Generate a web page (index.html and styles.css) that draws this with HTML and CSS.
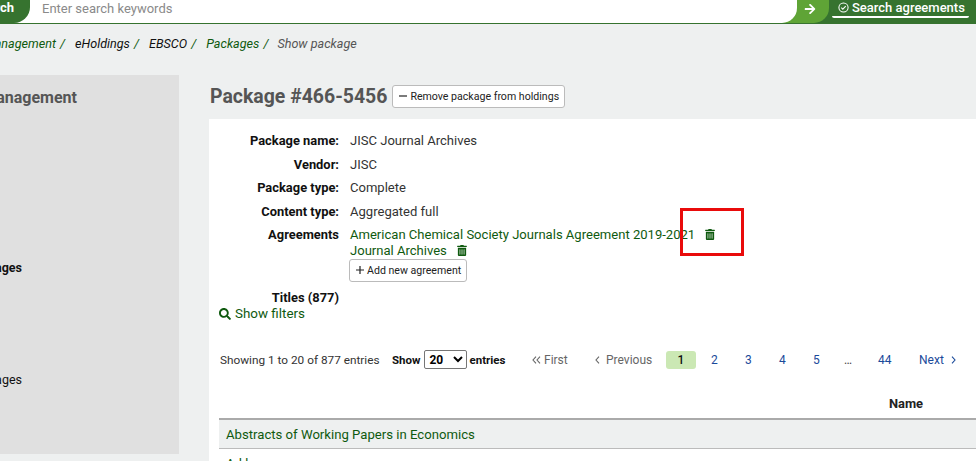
FILE: index.html
```html
<!DOCTYPE html>
<html lang="en">
<head>
<meta charset="utf-8">
<title>Show package</title>
<link rel="stylesheet" href="styles.css">
</head>
<body>
<header class="topbar">
  <div class="search-label"><span>Search</span></div>
  <div class="search-input">Enter search keywords</div>
  <div class="search-go">
    <svg class="go-icon" viewBox="0 0 448 512"><path d="M190.500 66.900l22.200-22.200c9.400-9.400 24.600-9.400 33.900 0L441 239c9.400 9.400 9.400 24.600 0 33.900L246.600 467.300c-9.400 9.400-24.600 9.400-33.900 0l-22.200-22.200c-9.500-9.500-9.300-25 .4-34.300L311.400 296H24c-13.300 0-24-10.700-24-24v-32c0-13.300 10.700-24 24-24h287.400L190.900 101.200c-9.800-9.300-10-24.800-.4-34.300z"/></svg>
  </div>
  <div class="search-tab">
    <svg class="tab-icon" viewBox="0 0 16 16"><circle cx="8" cy="8" r="6.700"/><path d="M4.800 8.200l2.200 2.200 4.200-4.400"/></svg>
    <span>Search agreements</span>
  </div>
</header>

<nav class="breadcrumbs">
  <a class="crumb-link">Management</a><span class="sep">/</span>
  <span class="crumb-plain">eHoldings</span><span class="sep">/</span>
  <span class="crumb-plain">EBSCO</span><span class="sep">/</span>
  <a class="crumb-link">Packages</a><span class="sep">/</span>
  <span class="crumb-current">Show package</span>
</nav>

<div class="layout">
  <aside class="sidebar">
    <h2 class="side-title"><span>Management</span></h2>
    <p class="side-item side-bold"><span>Packages</span></p>
    <p class="side-item side-normal"><span>Packages</span></p>
  </aside>
  <main class="main">
    <div class="title-row">
      <h1 class="page-title">Package #466-5456</h1>
      <button class="btn">
        <svg class="btn-icon" viewBox="0 0 10 10"><path d="M0 5h10"/></svg>Remove package from holdings
      </button>
    </div>
    <section class="panel">
      <dl class="details">
        <div class="row"><dt>Package name:</dt><dd>JISC Journal Archives</dd></div>
        <div class="row"><dt>Vendor:</dt><dd>JISC</dd></div>
        <div class="row"><dt>Package type:</dt><dd>Complete</dd></div>
        <div class="row"><dt>Content type:</dt><dd>Aggregated full</dd></div>
        <div class="row row-agreements"><dt>Agreements</dt>
          <dd>
            <div class="agreement"><a>American Chemical Society Journals Agreement 2019-2021</a>
              <svg class="trash" viewBox="0 0 448 512"><path d="M32 464a48 48 0 0 0 48 48h288a48 48 0 0 0 48-48V128H32zm272-256a16 16 0 0 1 32 0v224a16 16 0 0 1-32 0zm-96 0a16 16 0 0 1 32 0v224a16 16 0 0 1-32 0zm-96 0a16 16 0 0 1 32 0v224a16 16 0 0 1-32 0zM432 32H312l-9.400-18.700A24 24 0 0 0 281.100 0H166.800a23.700 23.700 0 0 0-21.400 13.300L136 32H16A16 16 0 0 0 0 48v32a16 16 0 0 0 16 16h416a16 16 0 0 0 16-16V48a16 16 0 0 0-16-16z"/></svg>
            </div>
            <div class="agreement"><a>Journal Archives</a>
              <svg class="trash" viewBox="0 0 448 512"><path d="M32 464a48 48 0 0 0 48 48h288a48 48 0 0 0 48-48V128H32zm272-256a16 16 0 0 1 32 0v224a16 16 0 0 1-32 0zm-96 0a16 16 0 0 1 32 0v224a16 16 0 0 1-32 0zm-96 0a16 16 0 0 1 32 0v224a16 16 0 0 1-32 0zM432 32H312l-9.400-18.700A24 24 0 0 0 281.100 0H166.800a23.700 23.700 0 0 0-21.400 13.300L136 32H16A16 16 0 0 0 0 48v32a16 16 0 0 0 16 16h416a16 16 0 0 0 16-16V48a16 16 0 0 0-16-16z"/></svg>
            </div>
            <button class="btn btn-add">
              <svg class="btn-icon" viewBox="0 0 10 10"><path d="M0 5h10M5 0v10"/></svg>Add new agreement
            </button>
          </dd>
        </div>
        <div class="row row-titles"><dt>Titles (877)</dt></div>
      </dl>
      <a class="filters">
        <svg class="search-icon" viewBox="0 0 512 512"><path d="M505 442.700L405.300 343c-4.500-4.500-10.600-7-17-7H372c27.600-35.300 44-79.700 44-128C416 93.100 322.900 0 208 0S0 93.100 0 208s93.100 208 208 208c48.300 0 92.700-16.400 128-44v16.300c0 6.400 2.500 12.500 7 17l99.700 99.700c9.400 9.400 24.600 9.400 33.900 0l28.300-28.300c9.400-9.400 9.400-24.600.1-34zM208 336c-70.700 0-128-57.200-128-128 0-70.700 57.200-128 128-128 70.700 0 128 57.200 128 128 0 70.700-57.200 128-128 128z"/></svg>Show filters
      </a>
      <div class="table-controls">
        <span class="info">Showing 1 to 20 of 877 entries</span>
        <label class="length">Show
          <select class="length-select"><option>20</option></select>
          entries</label>
        <div class="pager">
          <span class="page page-off page-first"><svg class="chev chev-double" viewBox="0 0 9 8"><path d="M4 .7L1 4l3 3.300M8 .7L5 4l3 3.300"/></svg>First</span>
          <span class="page page-off page-prev"><svg class="chev" viewBox="0 0 5 8"><path d="M4 .7L1 4l3 3.300"/></svg>Previous</span>
          <span class="page page-current">1</span>
          <span class="page">2</span>
          <span class="page">3</span>
          <span class="page">4</span>
          <span class="page page-five">5</span>
          <span class="page page-ellipsis">…</span>
          <span class="page page-last">44</span>
          <span class="page page-next">Next<svg class="chev" viewBox="0 0 5 8"><path d="M1 .7L4 4 1 7.300"/></svg></span>
        </div>
      </div>
      <table class="results">
        <thead><tr><th>Name</th></tr></thead>
        <tbody>
          <tr class="odd"><td><a>Abstracts of Working Papers in Economics</a></td></tr>
          <tr><td><a>Ad hoc</a></td></tr>
        </tbody>
      </table>
    </section>
  </main>
</div>
<div class="highlight"></div>
</body>
</html>
```
FILE: styles.css
```css
* { box-sizing: border-box; }
html, body { margin: 0; padding: 0; height: 461px; overflow: hidden; }
body {
  background: #eef0f0;
  font-family: Roboto, "Liberation Sans", sans-serif;
  font-size: 13.050px;
  color: #333;
  position: relative;
}
a { color: #0f5a0f; text-decoration: none; }

.topbar {
  display: flex;
  height: 24px;
  background: #36732f;
  border-bottom: 1px solid #36732f;
}
.search-label {
  width: 30px;
  height: 23px;
  flex: none;
  display: flex;
  justify-content: flex-end;
  padding-right: 16px;
  background: #36732f;
  color: #fff;
  font-weight: 700;
  font-size: 13px;
  line-height: 16px;
  border-bottom-right-radius: 16px;
  white-space: nowrap;
  position: relative;
  z-index: 2;
}
.search-input {
  width: 787px;
  flex: none;
  margin-left: -20px;
  height: 23px;
  background: #fff;
  color: #8a8a8a;
  font-size: 13px;
  line-height: 17px;
  padding-left: 32px;
  border-bottom-right-radius: 15px;
  position: relative;
  z-index: 1;
}
.search-go {
  width: 49px;
  flex: none;
  margin-left: -17px;
  height: 23px;
  background: #5fa436;
  border-radius: 0 0 15px 0;
}
.go-icon { width: 12px; height: 12px; fill: #fff; display: block; margin: 3px 0 0 24px; }
.search-tab {
  flex: none;
  width: 137px;
  margin-left: 3px;
  display: flex;
  align-items: center;
  gap: 3px;
  height: 18px;
  padding: 0 0 2px 6px;
  color: #fff;
  font-size: 13px;
  font-weight: 500;
  border-bottom: 2px solid #fff;
  white-space: nowrap;
  border-radius: 0 0 2px 2px;
}
.tab-icon { width: 11px; height: 11px; fill: none; stroke: #fff; stroke-width: 1.500; }

.breadcrumbs {
  display: flex;
  align-items: center;
  height: 38px;
  margin-left: -16px;
  font-size: 12.600px;
  font-style: italic;
  white-space: nowrap;
}
.sep { color: #0f5a0f; margin: 0 10px 0 4px; }
.crumb-plain { color: #111; }
.crumb-current { color: #555; margin-left: -1px; }

.layout { display: flex; margin-top: 13px; }
.sidebar {
  width: 179px;
  height: 379px;
  flex: none;
  background: #e0e0e0;
  padding-top: 13px;
}
.side-title, .side-item { white-space: nowrap; display: flex; justify-content: flex-end; }
.side-title { margin: 0; width: 77px; font-size: 16px; line-height: 19px; font-weight: 700; color: #555; }
.side-item { margin: 0; width: 22px; font-size: 12.500px; color: #111; line-height: 14px; }
.side-bold { font-weight: 700; margin-top: 154px; }
.side-normal { margin-top: 98px; }

.main { flex: 1; margin-left: 30px; min-width: 0; }
.title-row { display: flex; align-items: center; gap: 5px; height: 44px; padding-bottom: 2px; padding-left: 1px; }
.page-title { margin: 2px 0 0; font-size: 19.450px; line-height: 24px; font-weight: 700; color: #555; white-space: nowrap; }
.btn {
  display: inline-flex;
  align-items: center;
  height: 23px;
  padding: 0 5px 0 6px;
  border: 1px solid #bbb;
  border-radius: 3px;
  background: #fff;
  color: #222;
  font-family: inherit;
  font-size: 10.600px;
  white-space: nowrap;
}
.btn-icon { width: 8px; height: 8px; margin-right: 3px; fill: none; stroke: #222; stroke-width: 1.500; }
.panel { background: #fff; height: 350px; padding: 10px 10px 0 10px; overflow: hidden; }

.details { margin: 0; }
.row { display: flex; min-height: 23.700px; align-items: flex-start; line-height: 23.600px; }
.row dt { width: 120px; text-align: right; font-weight: 700; color: #111; font-size: 12.900px; white-space: nowrap; }
.row dd { margin: 0 0 0 11px; color: #333; white-space: nowrap; }
.row-agreements { min-height: 0; margin-top: -1px; }
.row-agreements dd { line-height: 16px; padding-top: 4px; }
.agreement { display: flex; align-items: center; gap: 10px; }
.trash { width: 10px; height: 11px; fill: #0f5a0f; }
.btn-add { margin: 0 0 0 -1px; }
.row-titles { min-height: 16px; margin-top: 8px; line-height: 16px; }

.filters { display: flex; align-items: center; gap: 4px; line-height: 16px; font-size: 13.400px; }
.search-icon { width: 12px; height: 12px; fill: #0f5a0f; }

.table-controls { display: flex; align-items: center; margin-top: 27px; height: 22px; white-space: nowrap; }
.info { font-size: 11.800px; color: #333; width: 160px; margin-left: 1px; flex: none; padding-top: 1px; }
.length { font-size: 11.500px; font-weight: 700; color: #111; display: flex; align-items: center; gap: 3px; width: 140px; flex: none; margin-left: 12px; }
.length-select {
  width: 43px;
  height: 19px;
  margin: 0 -1px 0 1px;
  font-family: inherit;
  font-size: 12px;
  font-weight: 700;
  background: #fff;
  border: 1px solid #767676;
  border-radius: 2px;
}
.pager { display: flex; align-items: center; font-size: 12px; color: #1a4a9a; }
.page-off { color: #666; }
.page-first, .page-prev, .page-next { display: flex; align-items: center; }
.page-first { width: 63px; gap: 3px; }
.page-prev { width: 71px; gap: 6px; }
.page-next { gap: 7px; }
.chev { width: 5px; height: 8px; fill: none; stroke: currentColor; stroke-width: 1.100; flex: none; }
.chev-double { width: 9px; }
.page-current { width: 30px; height: 18px; line-height: 18px; text-align: center; background: #cbe8b4; color: #111; border-radius: 3px; font-weight: 500; }
.pager .page:nth-child(4) { margin-left: 15px; }
.pager .page:nth-child(n+4) { width: 34px; }
.pager .page.page-five { width: 31px; }
.pager .page.page-ellipsis { color: #444; width: 34px; }
.pager .page.page-last { width: 41px; }
.pager .page.page-next { width: auto; }

.results { width: 1374px; border-collapse: collapse; margin-top: 20px; font-size: 13.150px; }
.results th { height: 28px; text-align: center; padding: 0 0 2px; font-size: 12.900px; font-weight: 700; color: #222; border-bottom: 2px solid #aaa; }
.results td { height: 30px; padding-left: 7px; border-bottom: 1px solid #bbb; }
.results .odd td { background: #eef0f0; }

.highlight {
  position: absolute;
  left: 680px;
  top: 208px;
  width: 64px;
  height: 48px;
  border: 3px solid #e90b0b;
}
```
